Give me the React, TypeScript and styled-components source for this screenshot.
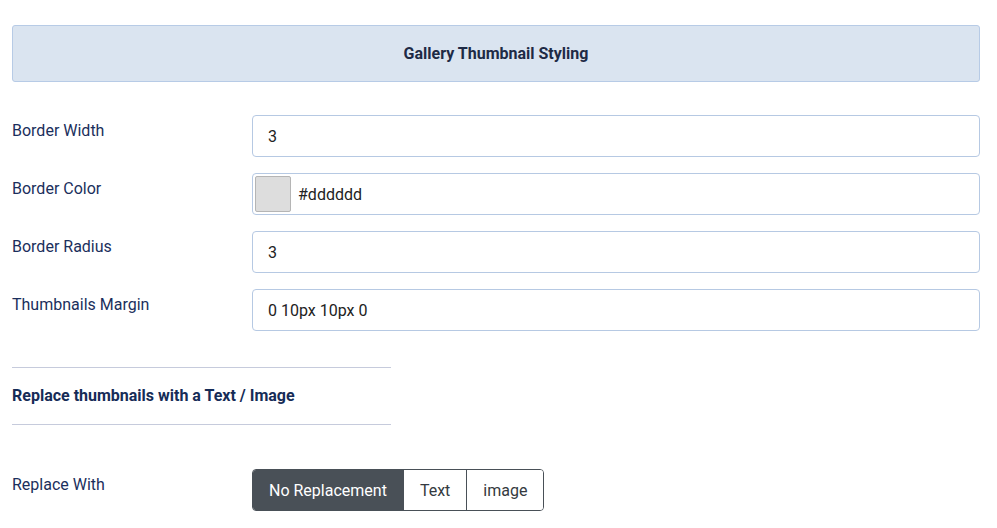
import styled, { createGlobalStyle } from "styled-components"

const GlobalStyle = createGlobalStyle`
  body {
    margin: 0;
    background: #ffffff;
    font-family: Roboto, "Liberation Sans", Arial, sans-serif;
  }
`

// styles
const Page = styled.div`
  padding: 25px 17px 0 12px;
`

const PanelHeader = styled.div`
  height: 55px;
  display: flex;
  align-items: center;
  justify-content: center;
  background: #dae4f0;
  border: 1px solid #b7cbe6;
  border-radius: 3px;
  font-size: 16px;
  font-weight: 700;
  color: #1e2a45;
  margin-bottom: 33px;
`

const FieldRow = styled.div`
  display: grid;
  grid-template-columns: 240px 1fr;
  align-items: start;
  margin-bottom: 16px;
`

const Label = styled.label`
  font-size: 16px;
  line-height: 20px;
  padding-top: 6px;
  color: #1b2f5c;
`

const InputBox = styled.div<{ $swatch?: boolean }>`
  height: 40px;
  display: flex;
  align-items: center;
  gap: 7px;
  padding: 0 ${({ $swatch }) => ($swatch ? "2px" : "15px")};
  border: 1px solid #b6c9e3;
  border-radius: 4px;
  font-size: 16px;
  color: #222;
`

const Swatch = styled.span<{ $color: string }>`
  width: 36px;
  height: 36px;
  box-sizing: border-box;
  background: ${({ $color }) => $color};
  border: 1px solid #b5b5b5;
  border-radius: 2px;
`

const SubSection = styled.div`
  width: 379px;
  margin-top: 36px;
  border-top: 1px solid #c6cbdc;
  border-bottom: 1px solid #c6cbdc;
  padding: 18px 0 19px;
  margin-bottom: 44px;
  font-size: 16px;
  font-weight: 700;
  color: #162c57;
`

const ButtonGroup = styled.div`
  display: inline-flex;
  border: 1px solid #495057;
  border-radius: 4px;
  overflow: hidden;
  justify-self: start;
`

const ToggleButton = styled.button<{ $active?: boolean }>`
  height: 40px;
  padding: 0 16px;
  border: none;
  border-left: 1px solid #495057;
  background: ${({ $active }) => ($active ? "#495057" : "#ffffff")};
  color: ${({ $active }) => ($active ? "#ffffff" : "#343a40")};
  font-family: inherit;
  font-size: 16px;

  &:first-child {
    border-left: none;
  }
`

const fields = [
  { label: "Border Width", value: "3" },
  { label: "Border Color", value: "#dddddd", color: "#dddddd" },
  { label: "Border Radius", value: "3" },
  { label: "Thumbnails Margin", value: "0 10px 10px 0" },
]

export default function App() {
  return (
    <Page>
      <GlobalStyle />
      <PanelHeader>Gallery Thumbnail Styling</PanelHeader>

      {fields.map((f) => (
        <FieldRow key={f.label}>
          <Label>{f.label}</Label>
          <InputBox $swatch={!!f.color}>
            {f.color && <Swatch $color={f.color} />}
            {f.value}
          </InputBox>
        </FieldRow>
      ))}

      <SubSection>Replace thumbnails with a Text / Image</SubSection>

      <FieldRow>
        <Label>Replace With</Label>
        <ButtonGroup>
          <ToggleButton $active>No Replacement</ToggleButton>
          <ToggleButton>Text</ToggleButton>
          <ToggleButton>image</ToggleButton>
        </ButtonGroup>
      </FieldRow>
    </Page>
  )
}
